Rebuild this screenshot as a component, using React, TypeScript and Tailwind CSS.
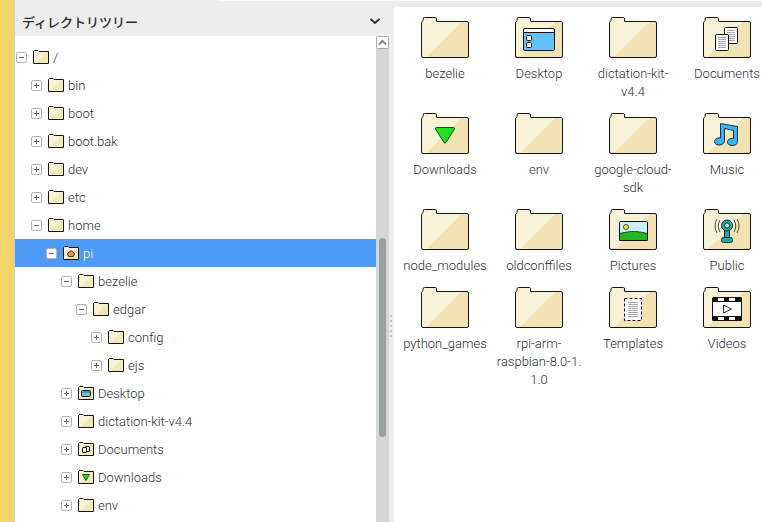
import React, { useState } from 'react';

type Kind =
  | 'home'
  | 'desktop'
  | 'documents'
  | 'downloads'
  | 'music'
  | 'pictures'
  | 'public'
  | 'templates'
  | 'videos';

type TreeItem = {
  name: string;
  indent: string;
  open?: boolean;
  kind?: Kind;
};

/*
|--------------------------------------------------------------------------
| DATA
|--------------------------------------------------------------------------
*/
const tree: TreeItem[] = [
  { name: '/', indent: 'pl-px', open: true },
  { name: 'bin', indent: 'pl-4' },
  { name: 'boot', indent: 'pl-4' },
  { name: 'boot.bak', indent: 'pl-4' },
  { name: 'dev', indent: 'pl-4' },
  { name: 'etc', indent: 'pl-4' },
  { name: 'home', indent: 'pl-4', open: true },
  { name: 'pi', indent: 'pl-[31px]', open: true, kind: 'home' },
  { name: 'bezelie', indent: 'pl-[46px]', open: true },
  { name: 'edgar', indent: 'pl-[61px]', open: true },
  { name: 'config', indent: 'pl-[76px]' },
  { name: 'ejs', indent: 'pl-[76px]' },
  { name: 'Desktop', indent: 'pl-[46px]', kind: 'desktop' },
  { name: 'dictation-kit-v4.4', indent: 'pl-[46px]' },
  { name: 'Documents', indent: 'pl-[46px]', kind: 'documents' },
  { name: 'Downloads', indent: 'pl-[46px]', kind: 'downloads' },
  { name: 'env', indent: 'pl-[46px]' },
];

const files: { name: string; kind?: Kind }[] = [
  { name: 'bezelie' },
  { name: 'Desktop', kind: 'desktop' },
  { name: 'dictation-kit-v4.4' },
  { name: 'Documents', kind: 'documents' },
  { name: 'Downloads', kind: 'downloads' },
  { name: 'env' },
  { name: 'google-cloud-sdk' },
  { name: 'Music', kind: 'music' },
  { name: 'node_modules' },
  { name: 'oldconffiles' },
  { name: 'Pictures', kind: 'pictures' },
  { name: 'Public', kind: 'public' },
  { name: 'python_games' },
  { name: 'rpi-arm-raspbian-8.0-1.1.0' },
  { name: 'Templates', kind: 'templates' },
  { name: 'Videos', kind: 'videos' },
];

/*
|--------------------------------------------------------------------------
| ICONS
|--------------------------------------------------------------------------
*/
function SmallFolder({ kind }: { kind?: Kind }) {

  return (

    <svg viewBox="0 0 16 16" className="h-4 w-4 shrink-0" aria-hidden="true">

      <path d="M.5 2.5 1.5 1.5H5l1 1h9.5v12H.5z" fill="#f3e8b8" />
      <path d="M.5 2.5 1.5 1.5H5l1 1h8L2 14.500H.5z" fill="#f9f2d6" />
      <path d="M.5 2.500 1.500 1.500H5l1 1h9.500v12H.5z" fill="none" stroke="#16160e" />

      {kind === 'home' && (
        <path d="M8 5.500 4.500 8.500l1 3h5l1-3z" fill="#f08a50" stroke="#5a3420" />
      )}

      {kind === 'desktop' && (
        <>
          <rect x="3.500" y="5.500" width="9" height="6" rx="1" fill="#62c2fb" stroke="#16160e" />
          <path d="M4 7h8" stroke="#3a5f74" />
        </>
      )}

      {kind === 'documents' && (
        <g fill="#fff" stroke="#16160e">
          <rect x="7.500" y="5.500" width="4" height="5" rx=".5" />
          <rect x="4.500" y="6.500" width="4" height="5" rx=".5" />
        </g>
      )}

      {kind === 'downloads' && (
        <path d="M4.500 5.500h7L8 11.500z" fill="#22dd22" stroke="#235c13" strokeLinejoin="round" />
      )}

    </svg>

  );
}

function Emblem({ kind }: { kind?: Kind }) {

  if (kind === 'desktop') {
    return (
      <g stroke="#111">
        <rect x="8.500" y="14.500" width="31" height="22" rx="1.500" fill="#62c2fb" />
        <path d="M8.500 18.500V16q0-1.500 1.500-1.500h28q1.500 0 1.500 1.500v2.500z" fill="#fff" />
        <rect x="11.500" y="21.500" width="5" height="5" rx="1" fill="#fff" />
        <rect x="11.500" y="28.500" width="5" height="5" rx="1" fill="#fff" />
      </g>
    );
  }

  if (kind === 'documents') {
    return (
      <g stroke="#111">
        <rect x="21.500" y="13.500" width="13" height="16" rx="1" fill="#fff" />
        <path d="M24 16.500h8M24 18.500h8M24 20.500h8M24 22.500h8M24 24.500h8M24 26.500h8" stroke="#aaa" />
        <rect x="12.500" y="20.500" width="13" height="16" rx="1" fill="#fff" />
        <path d="M15 23.500h8M15 25.500h8M15 27.500h8M15 29.500h8M15 31.500h8M15 33.500h8" stroke="#aaa" />
      </g>
    );
  }

  if (kind === 'downloads') {
    return (
      <path
        d="M15.500 17.500h17q1.500 0 1 1.500l-8.500 13.500q-1 1.500-2 0L14.500 19q-.5-1.500 1-1.500z"
        fill="#22dd22"
        stroke="#14500c"
      />
    );
  }

  if (kind === 'music') {
    return (
      <path
        d="M17.500 13.500 34.500 16.500V31.500C34.500 34.500 32 35.500 29 35.500S24.500 34 24.500 32s2-4 6-3.500V20.500L21.500 18.500V30.500C21.500 33.500 19 35 16 35s-4.500-1.500-4.500-3.500 2-4 6-3.500z"
        fill="#3eb2f2"
        stroke="#16384a"
        strokeLinejoin="round"
      />
    );
  }

  if (kind === 'pictures') {
    return (
      <g>
        <rect x="10.500" y="15.500" width="28" height="19" fill="#cdeefb" />
        <path d="M10.500 27.500q7-1.500 12-2t16 2v7h-28z" fill="#22b722" stroke="#154f12" />
        <circle cx="17" cy="21" r="2.500" fill="#ffee33" stroke="#4a4715" />
        <rect x="10.500" y="15.500" width="28" height="19" rx="1" fill="none" stroke="#111" />
      </g>
    );
  }

  if (kind === 'public') {
    return (
      <g stroke="#15302f">
        <path d="M21.500 24h5v9h-5z" fill="#22a9a9" />
        <rect x="18.500" y="31.500" width="11" height="5" rx="2" fill="#22a9a9" />
        <circle cx="24" cy="19.500" r="5.500" fill="#22a9a9" />
        <circle cx="24" cy="19.500" r="2.500" fill="#b5eceb" />
        <path
          d="M17 14q-3.500 6 0 12M14 13q-4 7 0 14M31 14q3.500 6 0 12M34 13q4 7 0 14"
          fill="none"
          stroke="#4e4a3c"
        />
      </g>
    );
  }

  if (kind === 'templates') {
    return (
      <g>
        <path d="M15.500 14.500h17v22h-17z" fill="#fff" stroke="#111" strokeDasharray="3 2" />
        <path
          d="M19 18.500h10M19 20.500h10M19 22.500h10M19 24.500h10M19 26.500h10M19 28.500h10M19 30.500h10M19 32.500h10"
          stroke="#aaa"
        />
      </g>
    );
  }

  if (kind === 'videos') {
    return (
      <g>
        <rect x="9" y="13" width="30" height="24" rx="1.500" fill="#111" />
        <path d="M10 18h28v14H10z" fill="#fff" />
        <path
          d="M15 14h6v3h-6zM26 14h6v3h-6zM15 33h6v3h-6zM26 33h6v3h-6z"
          fill="#fff"
        />
        <path d="M20.500 21v8l8-4z" fill="#fff" stroke="#333" strokeLinejoin="round" />
      </g>
    );
  }

  return null;
}

function LargeFolder({ kind }: { kind?: Kind }) {

  return (

    <svg viewBox="0 0 48 48" className="h-12 w-12" aria-hidden="true">

      <path
        d="M.5 8.500 2 6.500V5q0-1.500 1.500-1.500h11Q15.500 3.500 15.500 5v2.500H46q1.500 0 1.500 1.500v33q0 1.500-1.500 1.500H2Q.5 43.500.5 42z"
        fill="#f3e2b3"
      />
      <path
        d="M.5 8.500 2 6.500V5q0-1.500 1.500-1.500h11Q15.500 3.500 15.500 5v2.500H41L5 43.500H2Q.5 43.500.5 42z"
        fill="#f7f2d8"
      />
      <path
        d="M.5 8.500 2 6.500V5q0-1.500 1.500-1.500h11Q15.500 3.500 15.500 5v2.500H46q1.500 0 1.500 1.500v33q0 1.500-1.500 1.500H2Q.5 43.500.5 42z"
        fill="none"
        stroke="#16160e"
      />

      <Emblem kind={kind} />

    </svg>

  );
}

function Expander({ open }: { open: boolean }) {

  return (

    <svg viewBox="0 0 11 11" className="h-[11px] w-[11px]" aria-hidden="true">
      <rect x=".5" y=".5" width="10" height="10" rx="1.500" fill="#fff" stroke="#b4b4b4" />
      <path d={open ? 'M3 5.500h5' : 'M3 5.500h5M5.500 3v5'} stroke="#666" />
    </svg>

  );
}

// version suffixes may wrap after "-1."
function FileName({ name }: { name: string }) {

  return (

    <span className="w-full">

      {name.split(/(?<=-\d\.)/).map((part, index) => (

        <React.Fragment key={index}>
          {index > 0 && <wbr />}
          {part}
        </React.Fragment>

      ))}

    </span>

  );
}

export default function App() {

  const [selected, setSelected] =
    useState('pi');

  return (

    <div className="relative flex h-screen overflow-hidden bg-[#ededed] font-['Roboto','Noto_Sans_CJK_JP',sans-serif] text-[13px] font-light text-[#2b2e30]">

      {/* TOP HIGHLIGHT */}
      <div className="absolute top-0 right-0 left-[218px] h-px bg-[#fafafa]" />

      {/* WINDOW EDGE */}
      <div className="w-[15px] shrink-0 border-r border-[#d0d0d0] bg-[#f3d56b]" />

      {/* DIRECTORY TREE */}
      <aside className="flex w-[374px] shrink-0 flex-col">

        <header className="flex h-9 shrink-0 items-center justify-between pt-2 pr-2 pl-[7px]">

          <h1 className="font-['Noto_Sans_CJK_JP',sans-serif] font-medium">
            ディレクトリツリー
          </h1>

          <button type="button" aria-label="Collapse" className="pb-0.5">
            <svg viewBox="0 0 12 8" className="h-2 w-3" aria-hidden="true">
              <path d="M1.500 2 6 6l4.500-4" fill="none" stroke="#333" strokeWidth="2" />
            </svg>
          </button>

        </header>

        <div className="flex min-h-0 flex-1">

          <ul className="min-w-0 flex-1 overflow-hidden bg-white pt-[7px]">

            {tree.map((item, index) => (

              <li
                key={index}
                className={`flex h-7 items-center ${item.indent} ${
                  item.name === selected
                    ? 'bg-[#4d9af7] text-white'
                    : ''
                }`}
              >

                <button
                  type="button"
                  aria-label={`Toggle ${item.name}`}
                  className="mr-1.5"
                >
                  <Expander open={!!item.open} />
                </button>

                <button
                  type="button"
                  onClick={() => setSelected(item.name)}
                  className="flex items-center gap-1"
                >
                  <SmallFolder kind={item.kind} />
                  <span className="pt-0.5">
                    {item.name}
                  </span>
                </button>

              </li>

            ))}

          </ul>

          {/* SCROLLBAR */}
          <div className="flex w-[13px] shrink-0 flex-col items-center bg-[#d6d6d6]">

            <button type="button" aria-label="Scroll up">
              <svg viewBox="0 0 13 13" className="h-[13px] w-[13px]" aria-hidden="true">
                <rect x=".5" y=".5" width="12" height="12" rx="1" fill="#fff" stroke="#aaa" />
                <path d="M3 8.500 6.500 5 10 8.500" fill="none" stroke="#888" strokeWidth="2" />
              </svg>
            </button>

            <div className="flex-[189]" />
            <div className="w-[7px] flex-[199] rounded-full bg-[#999e9e]" />
            <div className="flex-[85]" />

          </div>

        </div>

      </aside>

      {/* SPLITTER */}
      <div className="flex w-[5px] shrink-0 flex-col gap-[3px] pt-[315px] pl-px">
        <span className="h-0.5 w-0.5 bg-[#c2c2c2]" />
        <span className="h-0.5 w-0.5 bg-[#c2c2c2]" />
        <span className="h-0.5 w-0.5 bg-[#c2c2c2]" />
        <span className="h-0.5 w-0.5 bg-[#c2c2c2]" />
        <span className="h-0.5 w-0.5 bg-[#c2c2c2]" />
      </div>

      {/* FILES */}
      <main className="mt-[7px] min-w-0 flex-1 overflow-hidden bg-white pt-[7px] pl-1">

        <ul className="grid grid-cols-[repeat(4,94px)]">

          {files.map((file) => (

            <li key={file.name} className="pb-[9px]">

              <button
                type="button"
                className="flex w-full flex-col items-center gap-[3px] px-[3px] text-center leading-[18px]"
              >
                <LargeFolder kind={file.kind} />
                <FileName name={file.name} />
              </button>

            </li>

          ))}

        </ul>

      </main>

    </div>
  );
}
